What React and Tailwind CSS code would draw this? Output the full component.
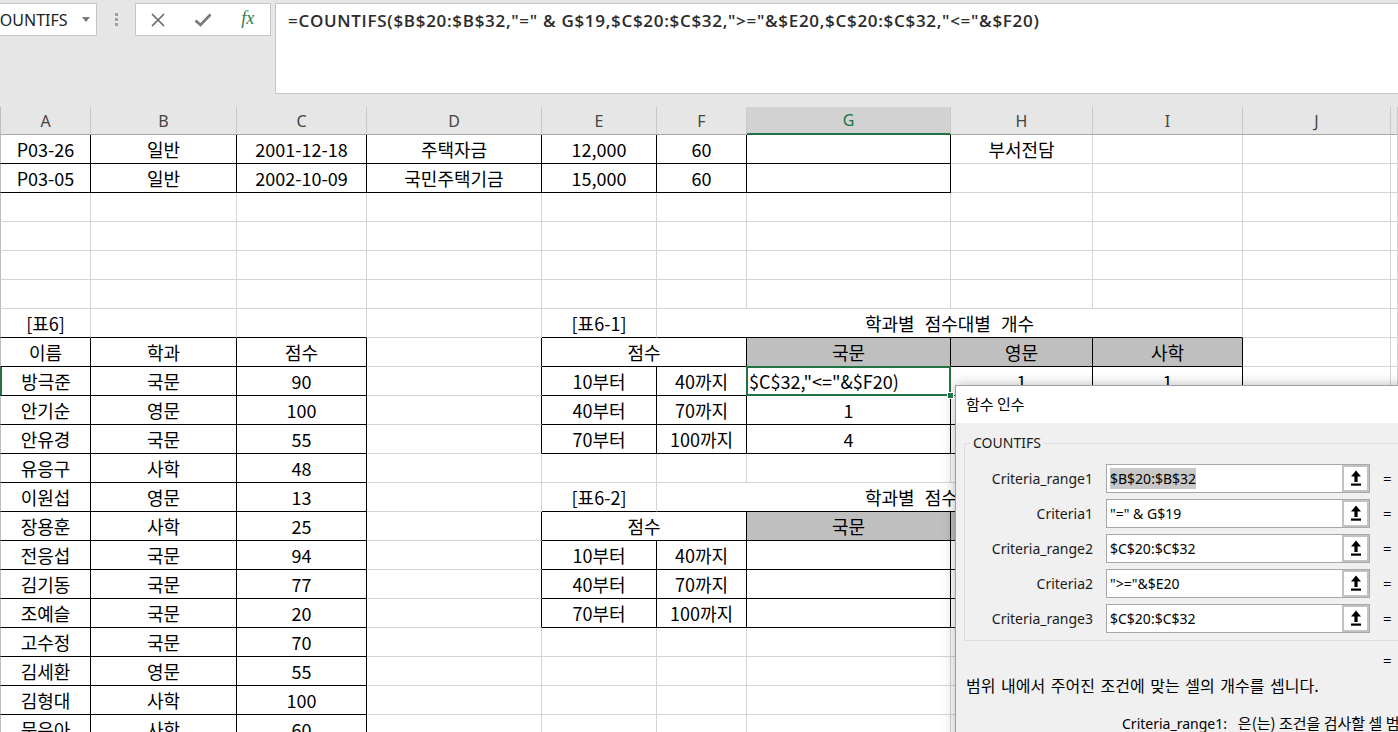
import React from 'react';

const CJK = "font-['Noto_Sans_CJK_KR','Noto_Sans',sans-serif]";
const UI = "font-['Noto_Sans','Noto_Sans_CJK_KR',sans-serif]";

const N = 21;
const grid = Array.from({ length: N + 2 }, () =>
  Array.from({ length: 11 }, () => ({ t: '', s: 1 }))
);
function set(r, c, props) {
  const s = props.s || 1;
  grid[r][c] = { t: '', ...props, s };
  for (let k = 1; k < s; k++) grid[r][c + k] = null;
}
function cover(r, c) {
  for (let k = c; k >= 0; k--) {
    const cell = grid[r][k];
    if (cell) return cell;
  }
  return null;
}

// rows 1-2
[
  ['P03-26', '일반', '2001-12-18', '주택자금', '12,000', '60', ''],
  ['P03-05', '일반', '2002-10-09', '국민주택기금', '15,000', '60', ''],
].forEach((vals, i) => {
  vals.forEach((t, c) => set(i + 1, c, { t, b: true, top: true }));
});
set(1, 7, { t: '부서전담' });

// table titles
set(7, 0, { t: '[표6]' });
set(7, 4, { t: '[표6-1]' });
set(7, 5, { t: '학과별 점수대별 개수', s: 4, title: true });
set(13, 4, { t: '[표6-2]' });
set(13, 5, { t: '학과별 점수대별 개수', s: 4, title: true });

// left table
set(8, 0, { t: '이름', b: true });
set(8, 1, { t: '학과', b: true });
set(8, 2, { t: '점수', b: true });
const people = [
  ['방극준', '국문', '90'],
  ['안기순', '영문', '100'],
  ['안유경', '국문', '55'],
  ['유응구', '사학', '48'],
  ['이원섭', '영문', '13'],
  ['장용훈', '사학', '25'],
  ['전응섭', '국문', '94'],
  ['김기동', '국문', '77'],
  ['조예슬', '국문', '20'],
  ['고수정', '국문', '70'],
  ['김세환', '영문', '55'],
  ['김형대', '사학', '100'],
  ['문은아', '사학', '60'],
];
people.forEach((p, i) => {
  p.forEach((t, c) => set(9 + i, c, { t, b: true }));
});

function scoreTable(hr, vals) {
  set(hr, 4, { t: '점수', s: 2, b: true });
  set(hr, 6, { t: '국문', b: true, g: true });
  set(hr, 7, { t: '영문', b: true, g: true });
  set(hr, 8, { t: '사학', b: true, g: true });
  const ranges = [
    ['10부터', '40까지'],
    ['40부터', '70까지'],
    ['70부터', '100까지'],
  ];
  ranges.forEach((rg, i) => {
    const r = hr + 1 + i;
    set(r, 4, { t: rg[0], b: true });
    set(r, 5, { t: rg[1], b: true });
    set(r, 6, { t: vals[i][0], b: true });
    set(r, 7, { t: vals[i][1], b: true });
    set(r, 8, { t: vals[i][2], b: true });
  });
}
scoreTable(8, [
  ['', '1', '1'],
  ['1', '', ''],
  ['4', '', ''],
]);
set(9, 6, { t: '$C$32,"<="&$F20)', b: true, active: true, left: true });
scoreTable(14, [
  ['', '', ''],
  ['', '', ''],
  ['', '', ''],
]);

const COLS = ['A', 'B', 'C', 'D', 'E', 'F', 'G', 'H', 'I', 'J', ''];

function Cell({ r, c, cell }) {
  const next = c + cell.s < 11 ? grid[r][c + cell.s] : null;
  const rb = cell.b || (next && next.b);
  const below = r + 1 <= N + 1 ? cover(r + 1, c) : null;
  const bb = cell.b || (below && below.b);
  const cls = [
    'h-[29px] flex items-center overflow-hidden whitespace-nowrap border-r border-b text-[18px] leading-none text-black',
    CJK,
    rb ? 'border-r-black' : 'border-r-[#d4d4d4]',
    bb ? 'border-b-black' : 'border-b-[#d4d4d4]',
    cell.g ? 'bg-[#bfbfbf]' : 'bg-white',
    cell.left ? 'justify-start pl-[2px]' : 'justify-center',
    c === 0 ? (r === 9 ? 'border-l-2 border-l-[#217346]' : 'border-l border-l-[#bdbdbd]') : '',
    cell.s === 2 ? 'col-span-2' : cell.s === 4 ? 'col-span-4' : '',
    cell.active ? 'relative overflow-visible z-10' : '',
    cell.title ? '[word-spacing:6px]' : '',
  ].join(' ');
  return (
    <div className={cls}>
      <span className="pb-[1px]">{cell.t}</span>
      {cell.active && (
        <>
          <div className="absolute -left-[1px] -top-[1px] -right-[1px] -bottom-[1px] border-2 border-[#217346] pointer-events-none" />
          <div className="absolute -right-[4px] -bottom-[4px] w-[7px] h-[7px] bg-[#217346] border border-white" />
        </>
      )}
    </div>
  );
}

function UpIcon() {
  return (
    <svg width="12" height="17" viewBox="0 0 12 17">
      <path d="M6 0.5 L11 6.5 H7.6 V12 H4.4 V6.5 H1 Z" fill="#000" />
      <rect x="1" y="13.5" width="10" height="2.2" fill="#000" />
    </svg>
  );
}

function ArgRow({ label, value, selected }) {
  return (
    <div className="flex items-center h-[29px] mb-[6px]">
      <div className="w-[128px] text-right text-[14px] text-[#1a1a1a] whitespace-nowrap">{label}</div>
      <div className="ml-[13px] w-[264px] h-[29px] bg-white border border-[#a8a8a8] flex items-center">
        <div className="pl-[3px] text-[14px] text-black whitespace-nowrap flex-1 overflow-hidden">
          <span className={selected ? 'bg-[#c8c8c8] py-[2px]' : ''}>{value}</span>
        </div>
        <div className="w-[27px] h-full border-2 border-[#c2c2c2] bg-white flex items-center justify-center">
          <UpIcon />
        </div>
      </div>
      <div className="ml-[13px] text-[15px] text-black">=</div>
    </div>
  );
}

function Dialog() {
  return (
    <div className={'absolute left-[955px] top-[385px] w-[500px] h-[400px] bg-[#f0f0f0] border border-[#a0a0a0] shadow-[0_0_12px_rgba(0,0,0,0.28)] ' + UI}>
      <div className={'h-[37px] bg-white flex items-center pl-[10px] text-[15px] text-black ' + CJK}>함수 인수</div>
      <fieldset className="ml-[8px] mt-[11px] w-[520px] border border-[#dcdcdc] pb-[7px]">
        <legend className="ml-[6px] px-[2px] text-[14px] leading-[18px] text-[#1a1a1a]">COUNTIFS</legend>
        <div className="pt-[12px]">
          <ArgRow label="Criteria_range1" value="$B$20:$B$32" selected />
          <ArgRow label="Criteria1" value={'"=" & G$19'} />
          <ArgRow label="Criteria_range2" value="$C$20:$C$32" />
          <ArgRow label="Criteria2" value={'">="&$E20'} />
          <div className="-mb-[6px]">
            <ArgRow label="Criteria_range3" value="$C$20:$C$32" />
          </div>
        </div>
      </fieldset>
      <div className="mt-[9px] h-[20px] pl-[427px] text-[15px] leading-[20px] text-black">=</div>
      <div className={'mt-[5px] pl-[10px] text-[16px] leading-[20px] [word-spacing:2px] text-black whitespace-nowrap ' + CJK}>
        범위 내에서 주어진 조건에 맞는 셀의 개수를 셉니다.
      </div>
      <div className={'mt-[18px] pl-[166px] text-[14px] leading-[20px] text-black whitespace-nowrap ' + UI}>
        Criteria_range1:&nbsp;&nbsp; <span className={'text-[15px] ' + CJK}>은(는) 조건을 검사할 셀 범위입니다.</span>
      </div>
    </div>
  );
}

export default function App() {
  const rows = [];
  for (let r = 1; r <= N; r++) rows.push(r);
  return (
    <div className="relative w-[1398px] h-[732px] overflow-hidden bg-white">
      {/* formula bar */}
      <div className="h-[107px] bg-[#e6e6e6] flex items-start pt-[3px]">
        <div className="-ml-px w-[98px] h-[33px] bg-white border border-[#c6c6c6] flex items-center overflow-hidden">
          <span className={'-ml-[10px] text-[16px] text-[#222] whitespace-nowrap ' + UI}>COUNTIFS</span>
          <svg className="ml-auto mr-[6px] shrink-0" width="8" height="5" viewBox="0 0 8 5">
            <path d="M0 0 H8 L4 5 Z" fill="#7a7a7a" />
          </svg>
        </div>
        <div className="w-[38px] flex flex-col items-center pt-[10px] gap-[2px]">
          <div className="w-[3px] h-[3px] bg-[#a0a0a0]" />
          <div className="w-[3px] h-[3px] bg-[#a0a0a0]" />
          <div className="w-[3px] h-[3px] bg-[#a0a0a0]" />
        </div>
        <div className="w-[136px] h-[33px] bg-white border border-[#c6c6c6] flex items-center">
          <div className="flex-1 flex justify-center">
            <svg width="16" height="16" viewBox="0 0 16 16">
              <path d="M2 2 L14 14 M14 2 L2 14" stroke="#6a6a6a" strokeWidth="1.7" />
            </svg>
          </div>
          <div className="flex-1 flex justify-center">
            <svg width="18" height="16" viewBox="0 0 18 16">
              <path d="M1.5 8.5 L6.5 13 L16.5 2.5" stroke="#777" strokeWidth="2.6" fill="none" />
            </svg>
          </div>
          <div className="flex-1 flex justify-center">
            <span className="font-['Liberation_Serif',serif] italic text-[18px] leading-none text-[#2f7d4f] -mt-[3px]">fx</span>
          </div>
        </div>
        <div className="ml-[4px] flex-1 -mr-[2px] h-[91px] bg-white border border-[#c6c6c6] pl-[12px] pt-[6px]">
          <div className="font-['Open_Sans',sans-serif] font-semibold text-[17px] tracking-[0.7px] leading-[22px] text-[#2b2b2b] whitespace-nowrap">
            =COUNTIFS($B$20:$B$32,"=" &amp; G$19,$C$20:$C$32,"&gt;="&amp;$E20,$C$20:$C$32,"&lt;="&amp;$F20)
          </div>
        </div>
      </div>

      {/* column headers */}
      <div className="grid grid-cols-[91px_146px_130px_175px_115px_90px_204px_142px_150px_148px_1fr] h-[28px] bg-[#e6e6e6]">
        {COLS.map((l, i) => (
          <div
            key={i}
            className={
              'flex items-center justify-center text-[16px] border-r border-r-[#c8c8c8] ' +
              UI +
              (i === 0 ? ' border-l border-l-[#bdbdbd]' : '') +
              (l === 'G'
                ? ' bg-[#d2d2d2] text-[#217346] border-b-2 border-b-[#217346]'
                : ' text-[#444] border-b border-b-[#a8a8a8]')
            }
          >
            {l}
          </div>
        ))}
      </div>

      {/* sheet */}
      <div className="grid grid-cols-[91px_146px_130px_175px_115px_90px_204px_142px_150px_148px_1fr]">
        {rows.map((r) =>
          grid[r].map((cell, c) => (cell ? <Cell key={r + '-' + c} r={r} c={c} cell={cell} /> : null))
        )}
      </div>

      <Dialog />
    </div>
  );
}
